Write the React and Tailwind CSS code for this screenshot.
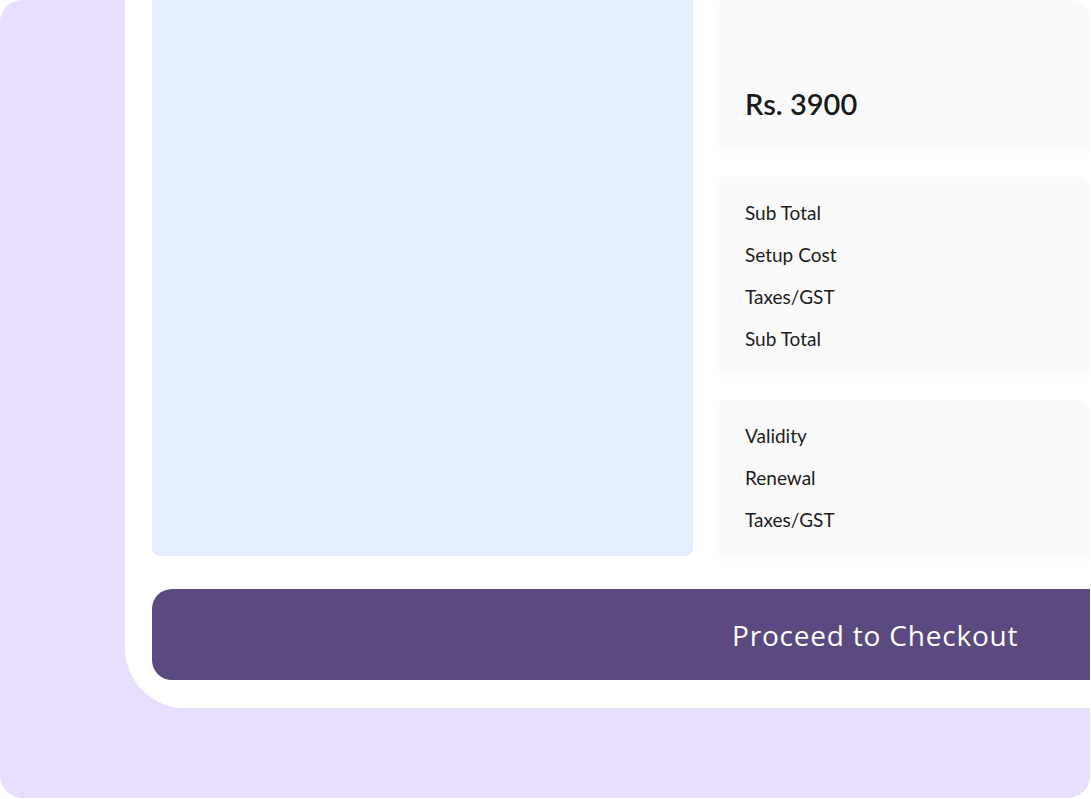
export default function App() {
  const panel = "bg-[#fafafa] rounded-tr-[14px] shadow-[0_3px_8px_rgba(0,0,0,0.025)]";
  const label = "text-[19px] leading-[22px] text-[#1c1c1c]";
  return (
    <div className="w-[1091px] h-[799px] bg-white" style={{ fontFamily: "Lato, 'Open Sans', sans-serif" }}>
      <div className="w-[1090px] h-[798px] bg-[#e8dffe] rounded-[22px] overflow-hidden">
        <div className="ml-[125px] h-[708px] bg-white rounded-bl-[60px] pl-[27px] flex flex-col">
          <div className="flex gap-[27px] h-[556px]">
            <div className="w-[541px] h-full bg-[#e5eefe] rounded-b-[8px]" />
            <div className="flex-1 flex flex-col gap-[29px]">
              <div className={`${panel} h-[148px] pl-[25px] pt-[89px]`}>
                <span className="block text-[29px] font-semibold text-[#1a1a1a] leading-[30px]">Rs. 3900</span>
              </div>
              <div className={`${panel} h-[195px] pl-[25px] pt-[25px] flex flex-col gap-[20px]`}>
                <span className={label}>Sub Total</span>
                <span className={label}>Setup Cost</span>
                <span className={label}>Taxes/GST</span>
                <span className={label}>Sub Total</span>
              </div>
              <div className={`${panel} h-[156px] pl-[25px] pt-[25px] flex flex-col gap-[20px]`}>
                <span className={label}>Validity</span>
                <span className={label}>Renewal</span>
                <span className={label}>Taxes/GST</span>
              </div>
            </div>
          </div>
          <div className="mt-[33px] h-[91px] bg-[#5b4a80] rounded-l-[20px] flex items-center pl-[580px]">
            <span className="text-white text-[28px] leading-none tracking-[0.8px]" style={{ fontFamily: "'Open Sans', sans-serif" }}>Proceed to Checkout</span>
          </div>
        </div>
      </div>
    </div>
  );
}
